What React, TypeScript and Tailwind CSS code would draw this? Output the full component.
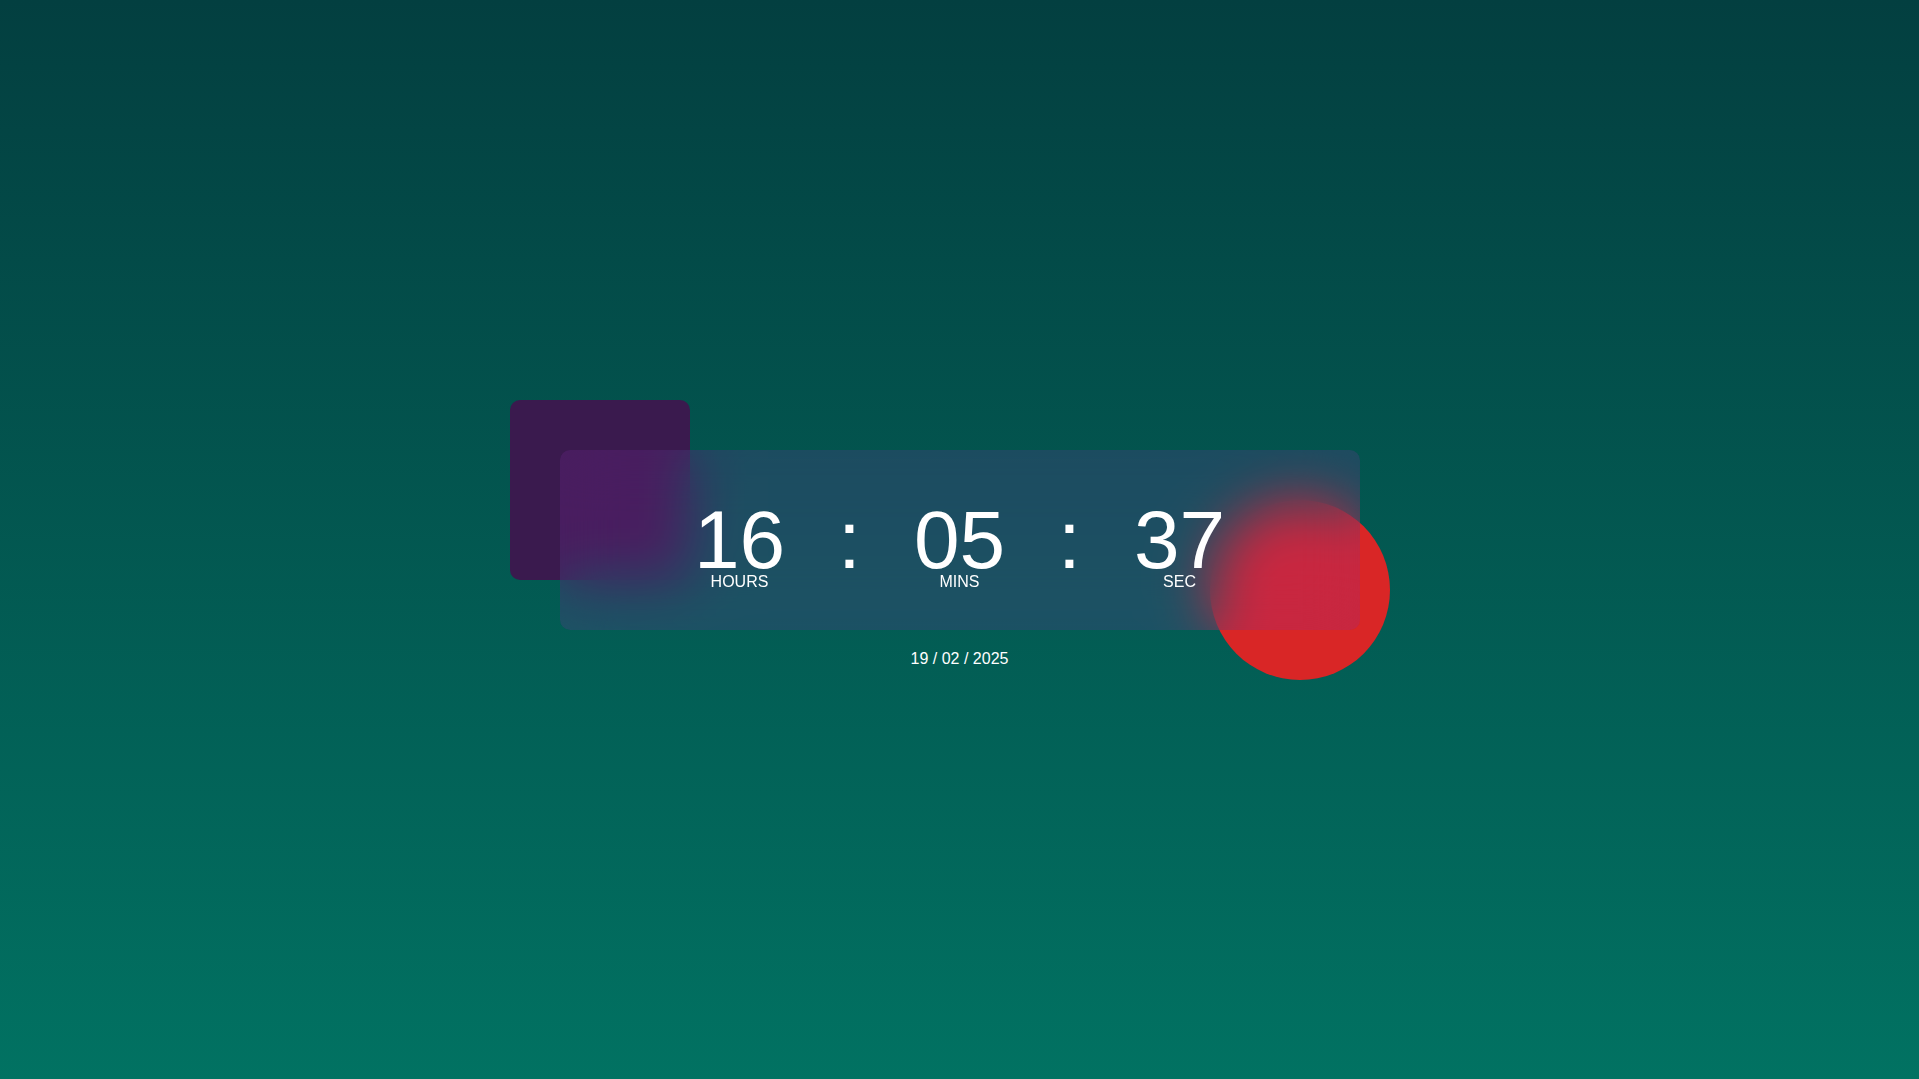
import React from "react";

function Unit({ value, label }: { value: string; label: string }) {
  return (
    <div className="flex w-[110px] flex-col items-center">
      <div className="text-[82px] leading-[68px] text-white">{value}</div>
      <div className="text-[16px] leading-none text-white">{label}</div>
    </div>
  );
}

function Colon() {
  return (
    <div className="flex w-[110px] justify-center text-[82px] leading-[68px] text-white">:</div>
  );
}

export default function App() {
  return (
    <div
      className="grid h-screen w-full grid-rows-[1fr_auto_1fr] justify-items-center overflow-hidden bg-gradient-to-b from-[#033f40] to-[#017262]"
      style={{ fontFamily: '"Liberation Sans", Arial, sans-serif' }}
    >
      <div />
      <div className="relative h-[180px] w-[800px]">
        <div className="absolute -left-[50px] -top-[50px] h-[180px] w-[180px] rounded-[10px] bg-[#3a1a4e]" />
        <div className="absolute -bottom-[50px] -right-[30px] h-[180px] w-[180px] rounded-full bg-[#d92626]" />
        <div className="relative flex h-full w-full items-start justify-center rounded-[10px] bg-[#892eab]/20 pt-[56px] backdrop-blur-[28px]">
          <Unit value="16" label="HOURS" />
          <Colon />
          <Unit value="05" label="MINS" />
          <Colon />
          <Unit value="37" label="SEC" />
        </div>
      </div>
      <div className="pt-[17px] text-[16px] text-white">19 / 02 / 2025</div>
    </div>
  );
}
